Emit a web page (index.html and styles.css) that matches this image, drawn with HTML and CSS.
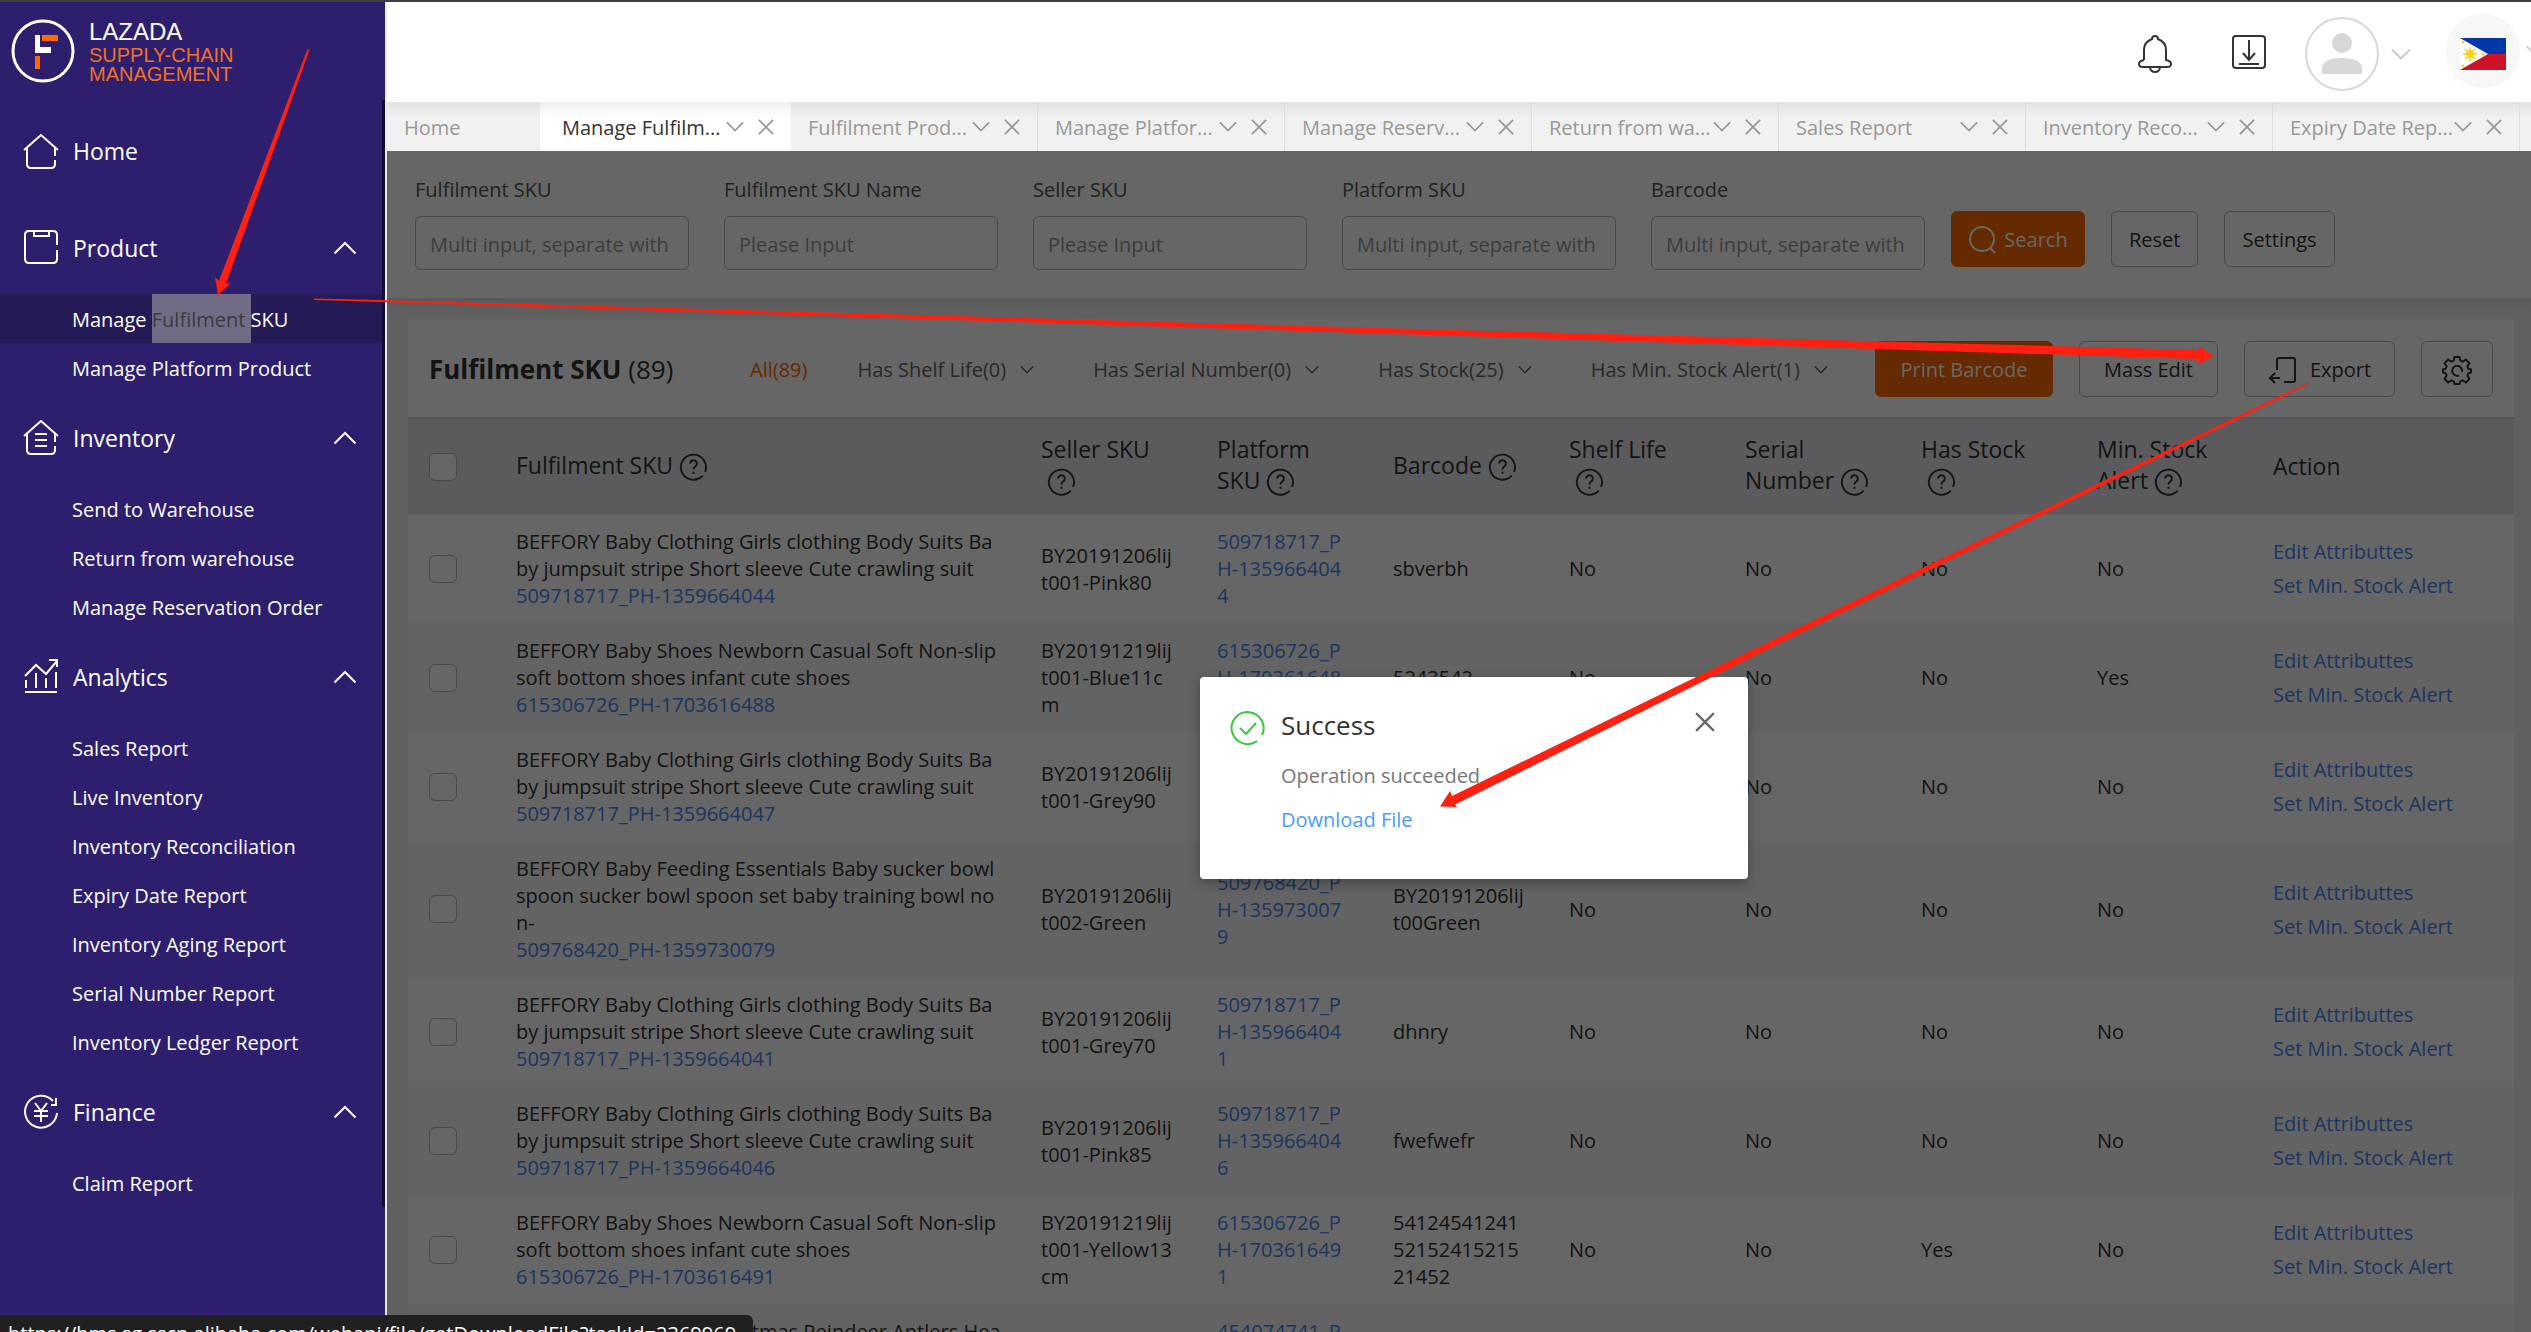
FILE: index.html
```html
<!DOCTYPE html>
<html lang="en">
<head>
<meta charset="utf-8">
<title>Manage Fulfilment SKU</title>
<link rel="stylesheet" href="styles.css">
</head>
<body>
<svg width="0" height="0" class="defs" aria-hidden="true">
  <symbol id="up" viewBox="0 0 24 14"><path d="M1.500 12.500 12 2l10.500 10.500"/></symbol>
  <symbol id="down" viewBox="0 0 20 12"><path d="M1 1.500l9 9 9-9"/></symbol>
  <symbol id="close" viewBox="0 0 18 18"><path d="M1 1l16 16M17 1 1 17"/></symbol>
  <symbol id="help" viewBox="0 0 30 30"><path d="M24.500 24.500A13 13 0 1 1 27 20.500M11.500 12a3.500 3.500 0 1 1 5.300 3Q15 16 15 18M15 20.500v2"/></symbol>
</svg>
<div class="app">
  <aside class="sidebar">
    <div class="brand">
      <svg class="logo" width="64" height="64" viewBox="0 0 64 64"><circle cx="32" cy="32" r="30" fill="none" stroke="#fff" stroke-width="3"/><path fill="#fff" d="M24 16h5v12h11v6H24z"/><path fill="#ff6a00" d="M31 16h16v6H31zM24 37h5v13h-5z"/></svg>
      <div class="brand-name"><span class="brand-top">LAZADA</span><span>SUPPLY-CHAIN</span><span>MANAGEMENT</span></div>
    </div>
    <nav class="nav">
      <a class="group home" href="#"><svg width="36" height="36" viewBox="0 0 36 36"><path d="M1 17 18 2l17 15M4 15v16q0 4 4 4h20q4 0 4-4v-4M32 15v8"/></svg><span>Home</span></a>
      <button class="group"><svg width="36" height="36" viewBox="0 0 36 36"><path d="M34 15V5q0-4-4-4H6Q2 1 2 5v24q0 4 4 4h24q4 0 4-4v-9M11 1v5h15V1"/></svg><span>Product</span><svg class="caret" width="24" height="14"><use href="#up"/></svg></button>
      <ul>
        <li><a class="active" href="#">Manage <mark>Fulfilment </mark>SKU</a></li>
        <li><a href="#">Manage Platform Product</a></li>
      </ul>
      <button class="group"><svg width="36" height="36" viewBox="0 0 36 36"><path d="M1 16 18 1l17 15M4 14v16q0 4 4 4h20q4 0 4-4v-4M32 14v8M12 14h12M12 20h12M12 26h12"/></svg><span>Inventory</span><svg class="caret" width="24" height="14"><use href="#up"/></svg></button>
      <ul>
        <li><a href="#">Send to Warehouse</a></li>
        <li><a href="#">Return from warehouse</a></li>
        <li><a href="#">Manage Reservation Order</a></li>
      </ul>
      <button class="group"><svg width="36" height="36" viewBox="0 0 36 36"><path d="M2 17 13 6l10 9L34 2M26 1h8v7M3 21v8M13 14v15M23 19v10M33 13v16M2 33h32"/></svg><span>Analytics</span><svg class="caret" width="24" height="14"><use href="#up"/></svg></button>
      <ul>
        <li><a href="#">Sales Report</a></li>
        <li><a href="#">Live Inventory</a></li>
        <li><a href="#">Inventory Reconciliation</a></li>
        <li><a href="#">Expiry Date Report</a></li>
        <li><a href="#">Inventory Aging Report</a></li>
        <li><a href="#">Serial Number Report</a></li>
        <li><a href="#">Inventory Ledger Report</a></li>
      </ul>
      <button class="group"><svg width="36" height="36" viewBox="0 0 36 36"><path d="M34 19A16 16 0 1 1 30 7M33 4v7h-5M12 9l6 8 6-8M11 17h14M11 22h14M18 17v11"/></svg><span>Finance</span><svg class="caret" width="24" height="14"><use href="#up"/></svg></button>
      <ul>
        <li><a href="#">Claim Report</a></li>
      </ul>
    </nav>
  </aside>

  <div class="main">
    <header class="topbar">
      <button aria-label="Notifications"><svg width="34" height="38" viewBox="0 0 34 38"><path d="M6 25V15Q6 7 14 4q0-3 3-3t3 3q8 3 8 11v10q5 1 5 4 0 3-4 3H5q-4 0-4-3 0-3 5-4M12 33q1 4 5 4t5-4"/></svg></button>
      <button class="downloads" aria-label="Downloads"><svg width="34" height="34" viewBox="0 0 34 34"><rect x="1" y="1" width="32" height="32" rx="3"/><path d="M17 5v19M11 18l6 7 6-7M7 29h20"/></svg></button>
      <button class="account" aria-label="Account"><svg width="74" height="74" viewBox="0 0 74 74"><circle cx="37" cy="37" r="36" fill="#fff" stroke="#d8d8d8"/><circle cx="37" cy="26" r="10" fill="#d8d8d8" stroke="none"/><path d="M17 57v-6q1-10 20-10t20 10v6z" fill="#d8d8d8" stroke="none"/></svg><svg class="pale" width="20" height="12"><use href="#down"/></svg></button>
      <button class="country" aria-label="Country"><span class="flag"><svg width="46" height="32" viewBox="0 0 46 32"><path fill="#0038a8" stroke="none" d="M0 0h46v16H0z"/><path fill="#ce1126" stroke="none" d="M0 16h46v16H0z"/><path fill="#fff" stroke="none" d="M0 0l28 16L0 32z"/><circle cx="10" cy="16" r="4" fill="#fcd116" stroke="none"/><path stroke="#fcd116" stroke-width="1.500" d="M10 9v14M3 16h14M5 11l10 10M15 11 5 21"/><g fill="#fcd116" stroke="none"><circle cx="3" cy="4" r="1.500"/><circle cx="3" cy="28" r="1.500"/><circle cx="23" cy="16" r="1.500"/></g></svg></span><svg class="pale" width="20" height="12"><use href="#down"/></svg></button>
    </header>

    <div class="tabs">
      <a class="tab first" href="#">Home</a>
      <div class="tab current"><a href="#">Manage Fulfilm...</a><svg width="18" height="11"><use href="#down"/></svg><svg width="16" height="16"><use href="#close"/></svg></div>
      <div class="tab"><a href="#">Fulfilment Prod...</a><svg width="18" height="11"><use href="#down"/></svg><svg width="16" height="16"><use href="#close"/></svg></div>
      <div class="tab"><a href="#">Manage Platfor...</a><svg width="18" height="11"><use href="#down"/></svg><svg width="16" height="16"><use href="#close"/></svg></div>
      <div class="tab"><a href="#">Manage Reserv...</a><svg width="18" height="11"><use href="#down"/></svg><svg width="16" height="16"><use href="#close"/></svg></div>
      <div class="tab"><a href="#">Return from wa...</a><svg width="18" height="11"><use href="#down"/></svg><svg width="16" height="16"><use href="#close"/></svg></div>
      <div class="tab"><a href="#">Sales Report</a><svg width="18" height="11"><use href="#down"/></svg><svg width="16" height="16"><use href="#close"/></svg></div>
      <div class="tab"><a href="#">Inventory Reco...</a><svg width="18" height="11"><use href="#down"/></svg><svg width="16" height="16"><use href="#close"/></svg></div>
      <div class="tab"><a href="#">Expiry Date Rep...</a><svg width="18" height="11"><use href="#down"/></svg><svg width="16" height="16"><use href="#close"/></svg></div>
    </div>

    <div class="content">
      <form class="filters">
        <label>Fulfilment SKU<input type="text" placeholder="Multi input, separate with"></label>
        <label>Fulfilment SKU Name<input type="text" placeholder="Please Input"></label>
        <label>Seller SKU<input type="text" placeholder="Please Input"></label>
        <label>Platform SKU<input type="text" placeholder="Multi input, separate with"></label>
        <label>Barcode<input type="text" placeholder="Multi input, separate with"></label>
        <div class="filter-actions">
          <button class="btn primary search" type="button"><svg width="28" height="28" viewBox="0 0 28 28"><circle cx="14" cy="13" r="12"/><path d="M22 22l5 5"/></svg>Search</button>
          <button class="btn" type="button">Reset</button>
          <button class="btn" type="button">Settings</button>
        </div>
      </form>

      <section class="panel">
        <div class="panel-head">
          <h1>Fulfilment SKU <span>(89)</span></h1>
          <div class="facets">
            <button class="facet on">All(89)</button>
            <button class="facet">Has Shelf Life(0)<svg width="14" height="9"><use href="#down"/></svg></button>
            <button class="facet">Has Serial Number(0)<svg width="14" height="9"><use href="#down"/></svg></button>
            <button class="facet">Has Stock(25)<svg width="14" height="9"><use href="#down"/></svg></button>
            <button class="facet">Has Min. Stock Alert(1)<svg width="14" height="9"><use href="#down"/></svg></button>
          </div>
          <div class="tools">
            <button class="btn primary print">Print Barcode</button>
            <button class="btn mass">Mass Edit</button>
            <button class="btn export"><svg width="28" height="28" viewBox="0 0 28 28"><path d="M9 14V4q0-2 2-2h14q2 0 2 2v20q0 2-2 2h-9M12 22H2M7 17l-5 5 5 5"/></svg>Export</button>
            <button class="btn gear" aria-label="Table settings"><svg width="30" height="30" viewBox="0 0 30 30"><path d="M12.500 2h5l.8 3.600 2.400 1 3.200-2 3.500 3.500-2 3.200 1 2.400 2.600.8v3l-2.600.8-1 2.400 2 3.200-3.500 3.500-3.200-2-2.400 1-.8 2.600h-5l-.8-2.600-2.400-1-3.200 2-3.500-3.500 2-3.200-1-2.400L1 17.500v-3l2.600-.8 1-2.400-2-3.200L6.100 4.600l3.200 2 2.400-1z"/><path d="M17 20.500A5 5 0 1 1 20 17"/></svg></button>
          </div>
        </div>
        <table>
          <colgroup><col class="c-check"><col class="c-name"><col class="c-std"><col class="c-std"><col class="c-std"><col class="c-std"><col class="c-std"><col class="c-std"><col class="c-std"><col></colgroup>
          <thead>
            <tr>
              <th><input type="checkbox" aria-label="Select all"></th>
              <th>Fulfilment SKU <svg class="help"><use href="#help"/></svg></th>
              <th>Seller SKU<br>&nbsp;<svg class="help"><use href="#help"/></svg></th>
              <th>Platform<br>SKU <svg class="help"><use href="#help"/></svg></th>
              <th>Barcode <svg class="help"><use href="#help"/></svg></th>
              <th>Shelf Life<br>&nbsp;<svg class="help"><use href="#help"/></svg></th>
              <th>Serial<br>Number <svg class="help"><use href="#help"/></svg></th>
              <th>Has Stock<br>&nbsp;<svg class="help"><use href="#help"/></svg></th>
              <th>Min. Stock<br>Alert <svg class="help"><use href="#help"/></svg></th>
              <th>Action</th>
            </tr>
          </thead>
          <tbody>
            <tr><td><input type="checkbox" aria-label="Select row 1"></td><td>BEFFORY Baby Clothing Girls clothing Body Suits Ba<br>by jumpsuit stripe Short sleeve Cute crawling suit<br><a href="#">509718717_PH-1359664044</a></td><td>BY20191206lij<br>t001-Pink80</td><td><a href="#">509718717_P<br>H-135966404<br>4</a></td><td>sbverbh</td><td>No</td><td>No</td><td>No</td><td>No</td><td class="acts"><a href="#">Edit Attributtes</a><a href="#">Set Min. Stock Alert</a></td></tr>
            <tr><td><input type="checkbox" aria-label="Select row 2"></td><td>BEFFORY Baby Shoes Newborn Casual Soft Non-slip<br>soft bottom shoes infant cute shoes<br><a href="#">615306726_PH-1703616488</a></td><td>BY20191219lij<br>t001-Blue11c<br>m</td><td><a href="#">615306726_P<br>H-170361648<br>8</a></td><td>5243542</td><td>No</td><td>No</td><td>No</td><td>Yes</td><td class="acts"><a href="#">Edit Attributtes</a><a href="#">Set Min. Stock Alert</a></td></tr>
            <tr><td><input type="checkbox" aria-label="Select row 3"></td><td>BEFFORY Baby Clothing Girls clothing Body Suits Ba<br>by jumpsuit stripe Short sleeve Cute crawling suit<br><a href="#">509718717_PH-1359664047</a></td><td>BY20191206lij<br>t001-Grey90</td><td></td><td></td><td></td><td>No</td><td>No</td><td>No</td><td class="acts"><a href="#">Edit Attributtes</a><a href="#">Set Min. Stock Alert</a></td></tr>
            <tr><td><input type="checkbox" aria-label="Select row 4"></td><td>BEFFORY Baby Feeding Essentials Baby sucker bowl<br>spoon sucker bowl spoon set baby training bowl no<br>n-<br><a href="#">509768420_PH-1359730079</a></td><td>BY20191206lij<br>t002-Green</td><td><a href="#">509768420_P<br>H-135973007<br>9</a></td><td>BY20191206lij<br>t00Green</td><td>No</td><td>No</td><td>No</td><td>No</td><td class="acts"><a href="#">Edit Attributtes</a><a href="#">Set Min. Stock Alert</a></td></tr>
            <tr><td><input type="checkbox" aria-label="Select row 5"></td><td>BEFFORY Baby Clothing Girls clothing Body Suits Ba<br>by jumpsuit stripe Short sleeve Cute crawling suit<br><a href="#">509718717_PH-1359664041</a></td><td>BY20191206lij<br>t001-Grey70</td><td><a href="#">509718717_P<br>H-135966404<br>1</a></td><td>dhnry</td><td>No</td><td>No</td><td>No</td><td>No</td><td class="acts"><a href="#">Edit Attributtes</a><a href="#">Set Min. Stock Alert</a></td></tr>
            <tr><td><input type="checkbox" aria-label="Select row 6"></td><td>BEFFORY Baby Clothing Girls clothing Body Suits Ba<br>by jumpsuit stripe Short sleeve Cute crawling suit<br><a href="#">509718717_PH-1359664046</a></td><td>BY20191206lij<br>t001-Pink85</td><td><a href="#">509718717_P<br>H-135966404<br>6</a></td><td>fwefwefr</td><td>No</td><td>No</td><td>No</td><td>No</td><td class="acts"><a href="#">Edit Attributtes</a><a href="#">Set Min. Stock Alert</a></td></tr>
            <tr><td><input type="checkbox" aria-label="Select row 7"></td><td>BEFFORY Baby Shoes Newborn Casual Soft Non-slip<br>soft bottom shoes infant cute shoes<br><a href="#">615306726_PH-1703616491</a></td><td>BY20191219lij<br>t001-Yellow13<br>cm</td><td><a href="#">615306726_P<br>H-170361649<br>1</a></td><td>54124541241<br>52152415215<br>21452</td><td>No</td><td>No</td><td>Yes</td><td>No</td><td class="acts"><a href="#">Edit Attributtes</a><a href="#">Set Min. Stock Alert</a></td></tr>
            <tr><td></td><td>BEFFORY Baby Hats Christmas Reindeer Antlers Hea<br>&nbsp;<br>&nbsp;</td><td></td><td><a href="#">454074741_P<br>&nbsp;<br>&nbsp;</a></td><td></td><td></td><td></td><td></td><td></td><td></td></tr>
          </tbody>
        </table>
      </section>

      <div class="overlay">
        <div class="dialog" role="dialog" aria-labelledby="dialog-title">
          <svg class="ok" width="36" height="36" viewBox="0 0 36 36"><path d="M28 32A16 16 0 1 1 33 26M11 19l6 6 10-11"/></svg>
          <div class="dialog-body">
            <h2 id="dialog-title">Success</h2>
            <p>Operation succeeded</p>
            <a href="#">Download File</a>
          </div>
          <button class="dialog-close" aria-label="Close"><svg width="20" height="20"><use href="#close"/></svg></button>
        </div>
      </div>
    </div>
  </div>
</div>

<svg class="arrows" width="2531" height="1332" viewBox="0 0 2531 1332" aria-hidden="true">
  <path d="M307.500 49l2 1L226 284l5-1-13 12-3-18 4 4z"/>
  <path d="M314 298.500l66 1.500 1000 28 819 22v-4l15 10-16 8v-5l-818-25.500L380 302l-66-2z"/>
  <path d="M2308 382.500l1 1-35 18-528 258.500-291 144.500 2 2.500-17-.500 10-15.500 2 5L1731 660z"/>
</svg>
<div class="status">https://bms.sg.sscp.alibaba.com/webapi/file/getDownloadFile?taskId=2369969</div>
</body>
</html>
```
FILE: styles.css
```css
* { box-sizing: border-box; }
html, body { height: 100%; }
body {
  margin: 0;
  overflow: hidden;
  border-top: 2px solid #404040;
  font: 20px/27px "Open Sans", "Noto Sans", sans-serif;
  color: #333;
}
a { color: #4a86ee; text-decoration: none; }
button { font: inherit; color: inherit; background: none; border: 0; padding: 0; }
svg { fill: none; stroke: currentColor; stroke-width: 2; flex: none; }
.defs { position: absolute; }
.app { display: flex; height: 100%; }

.sidebar { width: 387px; flex: none; background: #2d1f6e; border-right: 2px solid #eeeef8; color: #fff; }
.brand { display: flex; align-items: center; gap: 14px; height: 98px; padding: 0 11px; }
.logo { stroke: none; }
.brand-name { display: flex; flex-direction: column; font: 20px/19px "Liberation Sans", Arial, sans-serif; color: #f07028; }
.brand-top { font-size: 24px; line-height: 28px; color: #fff; }
.nav { border-right: 3px solid #120a3c; padding-top: 2px; }
.group { display: flex; align-items: center; width: 100%; height: 92px; padding: 0 25px 0 23px; gap: 14px; color: #fff; font-size: 23px; text-align: left; }
.home { height: 100px; padding-bottom: 2px; }
.group .caret { margin-left: auto; }
.nav ul { list-style: none; margin: 0; padding: 0; }
.nav li a { display: block; height: 49px; line-height: 51px; padding-left: 72px; overflow: hidden; color: #fff; white-space: pre; }
.nav li a.active { background: #241a56; }
.nav mark { display: inline-block; background: #716c85; color: #3c3b40; }

.main { flex: 1; min-width: 0; display: flex; flex-direction: column; overflow: hidden; }
.topbar { display: flex; align-items: center; justify-content: flex-end; height: 100px; flex: none; gap: 60px; background: #fff; padding-top: 4px; }
.topbar button { display: flex; align-items: center; }
.topbar .downloads { margin-right: -21px; padding-bottom: 4px; margin-left: 0; }
.topbar .account { gap: 12px; margin-left: 0; margin-right: -25px; }
.topbar .country { gap: 6px; margin-right: -15px; margin-top: -6px; }
.pale { color: #ccc; }
.flag { display: flex; align-items: center; justify-content: center; width: 74px; height: 74px; border-radius: 50%; background: #f7f7f7; padding-top: 6px; }

.tabs { display: flex; height: 49px; flex: none; background: linear-gradient(#e2e2e2, #f1f1f1 16px); color: #999; }
.tab { display: flex; align-items: center; width: 247px; flex: none; padding-left: 17px; border-right: 1px solid #ddd; }
.tab a, a.tab { color: #999; }
.tab a { width: 164px; padding-top: 2px; }
.tab svg { margin-right: 14px; }
.tab.first { width: 153px; padding-top: 2px; border: 0; }
.tab.current { width: 251px; padding-left: 22px; background: linear-gradient(#efefef, #fff 16px); border: 0; }
.tab.current a { color: #333; }

.content { position: relative; flex: 1; min-height: 0; overflow: hidden; background: #efefef; }
.filters { display: flex; height: 147px; padding: 25px 28px 0; gap: 35px; background: #fff; box-shadow: 0 2px 8px rgba(0,0,0,.1); }
.filters label { width: 274px; color: #555; }
.filters input { display: block; width: 100%; height: 54px; margin-top: 13px; padding: 2px 14px 0; border: 1px solid #b4b6bf; border-radius: 6px; font: inherit; background: #fff; }
.filters input::placeholder { color: #999; opacity: 1; }
.filter-actions { display: flex; gap: 26px; padding-top: 35px; margin-left: -9px; }
.btn { display: flex; align-items: center; justify-content: center; height: 56px; padding: 1px 17px 0; border: 1px solid #b4b6bf; border-radius: 6px; color: #333; }
.btn.primary { background: #ff6a00; border-color: #ff6a00; color: #fff; }
.search { gap: 8px; width: 134px; }

.panel { margin: 21px 17px 0 21px; background: #fff; }
.panel-head { display: flex; align-items: center; height: 98px; padding: 2px 21px 0 21px; }
h1 { margin: 0; width: 321px; font-size: 26px; line-height: 36px; white-space: nowrap; }
h1 span { font-weight: 400; }
.facets { display: flex; gap: 59px; color: #666; white-space: nowrap; }
.facet { display: flex; align-items: center; gap: 14px; }
.facet.on { color: #ff6a00; margin-right: -9px; }
.tools { display: flex; gap: 26px; margin-left: auto; white-space: nowrap; }
.print { width: 178px; }
.mass { width: 139px; }
.export { width: 151px; gap: 14px; }
.gear { width: 72px; }

table { width: 100%; table-layout: fixed; border-collapse: collapse; white-space: nowrap; }
.c-check { width: 84px; }
.c-name { width: 525px; }
.c-std { width: 176px; }
th, td { padding: 14px 0 14px 24px; text-align: left; vertical-align: middle; }
th:first-child, td:first-child { padding-left: 21px; }
th { height: 96px; padding-top: 0; padding-bottom: 3px; background: #e4e4e8; border-top: 2px solid #d8d8d8; font-weight: 400; font-size: 23px; line-height: 31px; }
th:first-child, th:last-child { padding-bottom: 0; }
td { height: 109px; }
tbody tr:nth-child(even) { background: #f7f7f7; }
.help { width: 29px; height: 29px; vertical-align: -7px; }
input[type=checkbox] { appearance: none; display: block; width: 28px; height: 28px; margin: 0; border: 1px solid #b4b6bf; border-radius: 6px; background: #fff; }
.acts a { display: block; line-height: 34px; }
td.acts { padding-top: 7px; padding-bottom: 6px; }

.overlay { position: absolute; inset: 0; display: flex; align-items: flex-start; justify-content: center; padding: 526px 0 0 30px; background: rgba(0,0,0,.6); }
.dialog { display: flex; width: 548px; height: 202px; padding: 32px 33px 0 29px; gap: 16px; border-radius: 4px; background: #fff; box-shadow: 0 4px 12px rgba(0,0,0,.3); }
.ok { color: #35c93c; }
.dialog-body { flex: 1; color: #777; }
.dialog h2 { margin: 0 0 21px; font-weight: 400; font-size: 26px; line-height: 32px; color: #333; }
.dialog p { margin: 0 0 17px; }
.dialog-body a { color: #4a9bff; }
.dialog-close { align-self: flex-start; color: #666; padding-top: 2px; }

.arrows { position: absolute; top: 0; left: 0; fill: #ff2012; stroke: none; pointer-events: none; }
.status { position: fixed; left: 0; bottom: 0; width: 753px; height: 17px; padding: 5px 8px 0; overflow: hidden; border-radius: 0 6px 0 0; background: #202020; color: #fff; white-space: nowrap; }
```
